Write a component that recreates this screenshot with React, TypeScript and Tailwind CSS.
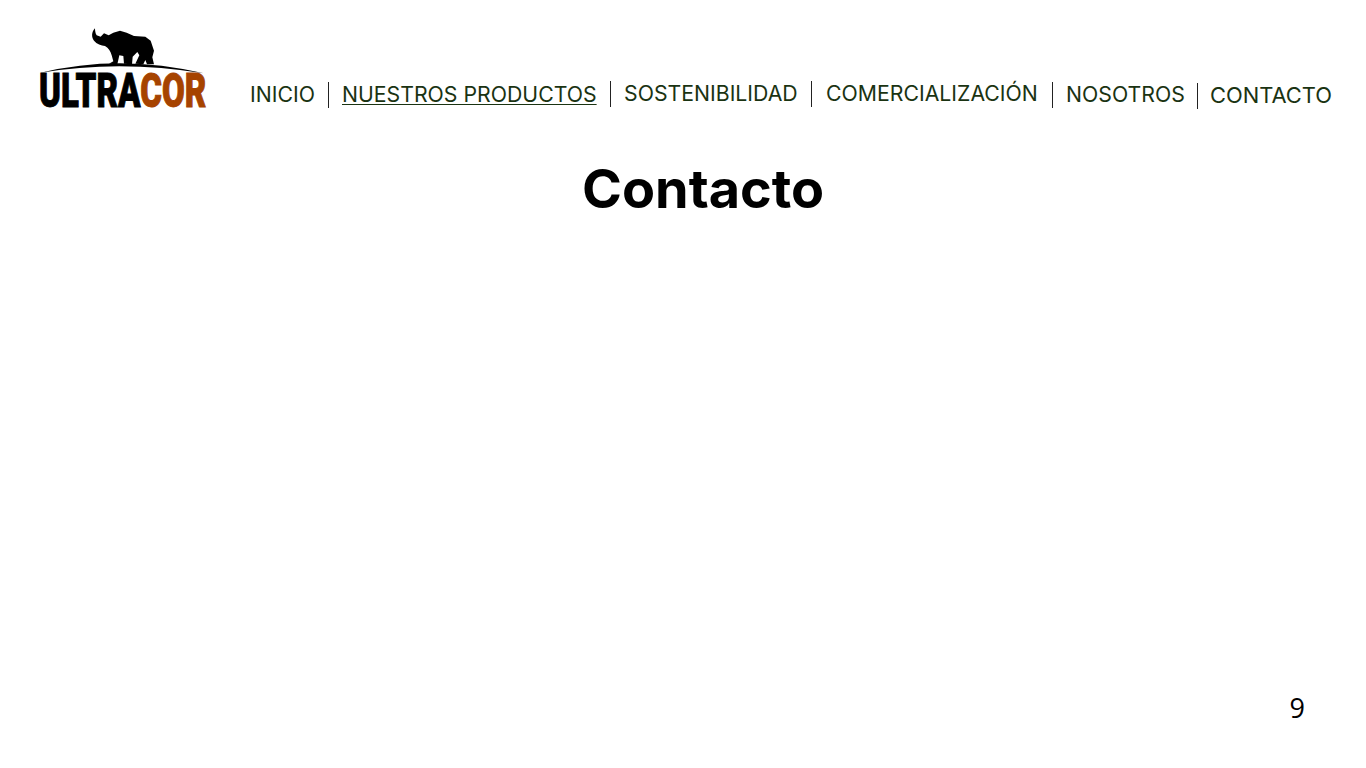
const navItems = [
  { label: 'INICIO', className: 'w-[64px] mt-[-1px]' },
  { label: 'NUESTROS PRODUCTOS', className: 'w-[255px] underline decoration-1 underline-offset-2 mt-[-2px]' },
  { label: 'SOSTENIBILIDAD', className: 'w-[173px] mt-[-3px]' },
  { label: 'COMERCIALIZACIÓN', className: 'w-[212px] mt-[-3px]' },
  { label: 'NOSOTROS', className: 'w-[119px] mt-[-1px]' },
  { label: 'CONTACTO', className: 'w-[122px] mt-[1px] text-[21.9px]' },
];

const separators = ['', 'mt-[1px] ml-[14px] mr-[13px]', 'mt-[-1px] ml-[13px] mr-[13px]', 'mt-[-2px] ml-[14px] mr-[14px]', 'mt-[1px] ml-[14px] mr-[13px]', 'mt-[2px] ml-[12px] mr-[12px]'];

function Logo() {
  return (
    <div className="relative w-[168px] h-[82px] shrink-0">
      <svg className="absolute left-0 top-0" width="168" height="50" viewBox="27 21 504 150">
        <path
          fill="#000"
          d="M195 25 C184 36 184 52 192 62 C200 72 214 76 225 78 C236 84 242 94 245 106 L250 124 L237 131 L262 133 L268 106 L280 108 L282 131 L306 133 L308 110 L322 96 L328 106 L316 131 L340 133 L346 120 L351 133 L372 133 L367 112 L372 92 L362 62 L346 50 L312 48 L290 38 L270 32 L250 38 L236 46 L222 40 L212 50 L200 46 C196 40 195 32 195 25 Z"
        />
        <path fill="#000" d="M32 158 Q270 100 522 160 Q270 118 32 158 Z" />
      </svg>
      <div className="absolute left-0 top-[37px] origin-left scale-x-[0.675] whitespace-nowrap font-['Roboto',sans-serif] text-[49px] leading-[54px] font-black [-webkit-text-stroke:1px_currentColor]">
        <span className="text-black">ULTRA</span>
        <span className="text-[#a64300]">COR</span>
      </div>
    </div>
  );
}

export default function App() {
  return (
    <div className="w-[1366px] h-[768px] bg-white flex flex-col overflow-hidden font-['Inter',sans-serif]">
      <header className="flex items-start pl-[39px] pt-[27px]">
        <Logo />
        <nav className="ml-[43px] mt-[53px] flex items-center text-[21.25px] leading-[28px] text-[#1a3312] font-normal">
          {navItems.map((item, i) => (
            <div key={item.label} className="flex items-center">
              {i > 0 && <div className={`w-px h-[26px] bg-[#222] ${separators[i]}`} />}
              <span className={`whitespace-nowrap ${item.className}`}>{item.label}</span>
            </div>
          ))}
        </nav>
      </header>
      <h1 className="mt-[47px] ml-[582px] text-[54px] leading-[66px] font-bold text-black">Contacto</h1>
      <div className="mt-auto mb-[42px] mr-[61px] self-end font-['Open_Sans',sans-serif] text-[27px] leading-[36px] text-black">
        9
      </div>
    </div>
  );
}
